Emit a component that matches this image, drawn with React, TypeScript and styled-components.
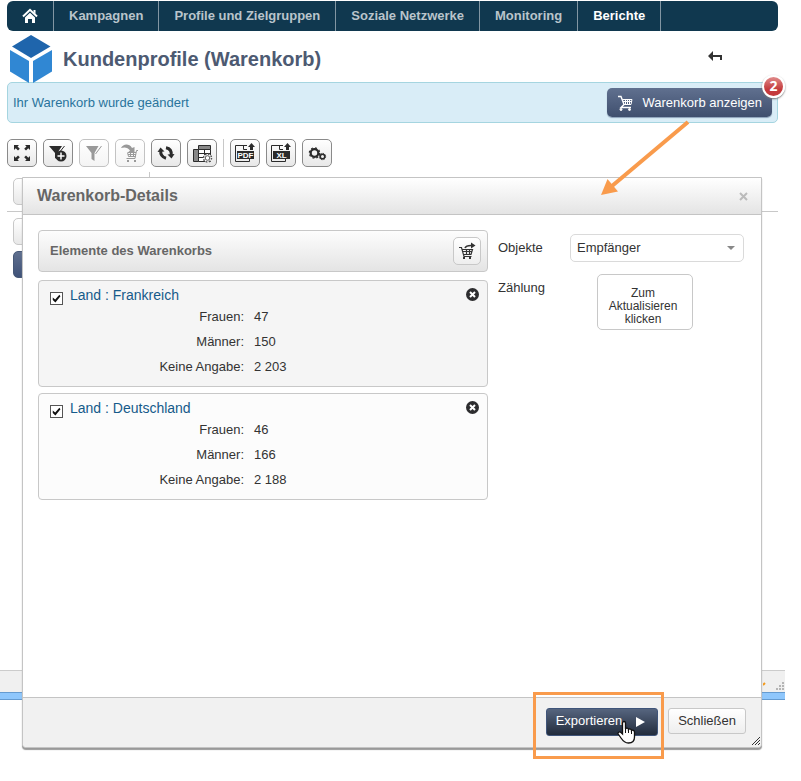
import React from 'react';
import styled, { createGlobalStyle, css } from 'styled-components';

const GlobalStyle = createGlobalStyle`
  *, *::before, *::after { box-sizing: border-box; }
  body {
    margin: 0;
    background: #fff;
    color: #333;
    font: 13px/18px "Liberation Sans", Arial, sans-serif;
  }
  button, input, select { font: inherit; color: inherit; margin: 0; }
  a { text-decoration: none; }
  svg { display: block; flex: none; }
`;

/* ---------- Page ---------- */

const Page = styled.div`
  position: relative;
  margin-right: 16px;
  padding-top: 1px;
`;

const NavBar = styled.nav`
  display: flex;
  margin: 0 7px;
  height: 30px;
  background: #10384f;
  border-radius: 6px;
`;

const NavLink = styled.a<{ $current?: boolean }>`
  display: flex;
  align-items: center;
  padding: 0 15px;
  border-right: 1px solid #8296a3;
  font-weight: bold;
  color: ${(p) => (p.$current ? '#fff' : '#b9c4cb')};
`;

const TitleRow = styled.header`
  display: flex;
  align-items: center;
  gap: 11px;
  height: 51px;
  padding: 4px 62px 0 9px;
`;

const PageTitle = styled.h1`
  flex: 1;
  margin: 0;
  font-size: 20px;
  line-height: 24px;
  color: #4d5a72;
`;

const PlainButton = styled.button`
  padding: 0;
  border: 0;
  background: none;
`;

const BackButton = styled(PlainButton)`
  padding-bottom: 4px;
`;

const RemoveButton = styled(PlainButton)`
  padding-top: 1px;
`;

const Notice = styled.div`
  display: flex;
  align-items: center;
  justify-content: space-between;
  height: 41px;
  margin: 0 7px;
  padding: 0 5px;
  border: 1px solid #a5d5e0;
  border-radius: 5px;
  background: #d9edf7;
  color: #2a749c;
`;

const CartButton = styled.button`
  position: relative;
  display: flex;
  align-items: center;
  gap: 9px;
  height: 29px;
  padding: 0 10px;
  border: 0;
  border-radius: 5px;
  background: linear-gradient(#60708f, #3f4f6e);
  color: #fff;
  box-shadow: 0 1px 1px #8ba0b8;
`;

const Badge = styled.span`
  position: absolute;
  top: -13px;
  right: -13px;
  width: 23px;
  height: 23px;
  border: 2px solid #fff;
  border-radius: 50%;
  background: linear-gradient(#e08a8a, #c43a3c 65%);
  box-shadow: 0 1px 2px #777;
  font: bold 14px/18px "Open Sans", sans-serif;
  text-align: center;
`;

const Toolbar = styled.div`
  display: flex;
  gap: 6px;
  padding: 16px 7px 0;
`;

const ToolButton = styled.button`
  width: 30px;
  height: 28px;
  padding: 0;
  border: 1px solid #8a8a8a;
  border-radius: 5px;
  background: linear-gradient(#fff, #e8e8e8);
  color: #2b2b2b;
  svg { margin: -1px; }
  &:disabled {
    border-color: #c3c3c3;
    background: linear-gradient(#fff, #f4f4f4);
    color: #999;
  }
`;

const ToolDivider = styled.span`
  width: 1px;
  background: #c8c8c8;
`;

/* ---------- Report behind the dialog ---------- */

const Report = styled.main`
  display: flex;
  flex-direction: column;
  height: 503px;
  padding: 5px 7px 0;
`;

const ColumnMark = styled.div`
  width: 1px;
  height: 6px;
  margin-left: 142px;
  background: #c8c8c8;
`;

const Field = styled.div<{ $active?: boolean }>`
  width: 60px;
  height: 27px;
  margin: 0 0 6px 6px;
  border: 1px solid ${(p) => (p.$active ? '#465877' : '#c8c8c8')};
  border-radius: 5px;
  background: ${(p) => (p.$active ? 'linear-gradient(#60708f, #3f5278)' : 'linear-gradient(#fff, #e8e8e8)')};
`;

const Rule = styled.hr`
  width: 100%;
  margin: 0 0 6px;
  border: 0;
  border-top: 1px solid #c8c8c8;
`;

const StatusBar = styled.footer`
  display: flex;
  justify-content: flex-end;
  align-items: flex-end;
  height: 22px;
  padding-bottom: 2px;
  border-top: 1px solid #ccc;
  background: #f0f0f0;
`;

const WindowEdge = styled.div`
  height: 8px;
  margin-bottom: 81px;
  border: solid #659bd0;
  border-width: 1px 0;
  background: #8fc7fc;
`;

/* ---------- Dialog ---------- */

const Dialog = styled.section`
  position: absolute;
  top: 177px;
  left: 22px;
  right: 23px;
  border: 1px solid #c4c4c4;
  border-radius: 0 0 4px 4px;
  background: #fff;
  box-shadow: 0 2px 1px #999;
`;

const DialogHeader = styled.div`
  display: flex;
  align-items: center;
  justify-content: space-between;
  height: 37px;
  padding: 0 13px 0 14px;
  border-bottom: 1px solid #c4c4c4;
  background: linear-gradient(#fff, #e4e4e4);
`;

const DialogTitle = styled.h2`
  margin: 0;
  font-size: 16px;
  line-height: 20px;
  color: #666;
`;

const DialogBody = styled.div`
  display: grid;
  grid-template-columns: 450fr 246fr;
  gap: 10px;
  min-height: 482px;
  padding: 15px 17px 15px 15px;
  align-items: start;
`;

const DialogFooter = styled.div`
  position: relative;
  display: flex;
  justify-content: flex-end;
  align-items: flex-start;
  gap: 10px;
  height: 50px;
  padding: 10px 15px;
  border-top: 1px solid #c4c4c4;
  border-radius: 0 0 4px 4px;
  background: #f1f1f1;
`;

const Grip = styled.svg`
  position: absolute;
  right: 1px;
  bottom: 2px;
`;

const ItemList = styled.div`
  display: flex;
  flex-direction: column;
  gap: 6px;
`;

const ListHeader = styled.div`
  display: flex;
  align-items: center;
  justify-content: space-between;
  height: 42px;
  margin-bottom: 2px;
  padding: 0 6px 0 11px;
  border: 1px solid #c8c8c8;
  border-radius: 4px;
  background: linear-gradient(#fdfdfd, #e4e4e4);
`;

const ListTitle = styled.h3`
  margin: 0;
  font-size: 13px;
  line-height: 18px;
  color: #666;
`;

const SmallButton = styled.button`
  width: 28px;
  height: 28px;
  padding: 0;
  border: 1px solid #c8c8c8;
  border-radius: 5px;
  background: linear-gradient(#fff, #eee);
  svg { margin: -1px; }
`;

const Card = styled.article<{ $shaded?: boolean }>`
  padding: 6px 8px 7px 11px;
  border: 1px solid #c8c8c8;
  border-radius: 4px;
  background: ${(p) => (p.$shaded ? '#f5f5f5' : '#fcfcfc')};
`;

const CardHead = styled.div`
  display: flex;
  align-items: flex-start;
  height: 17px;
`;

const CardLabel = styled.label`
  display: flex;
  flex: 1;
  gap: 7px;
  font-size: 14px;
  line-height: 17px;
  color: #155a8a;
`;

const CheckBox = styled.input`
  appearance: none;
  width: 13px;
  height: 13px;
  margin-top: 5px;
  border: 1px solid #555;
  background: #fff;
  &:checked::after {
    content: '';
    display: block;
    width: 11px;
    height: 11px;
    background: #111;
    clip-path: polygon(16% 42%, 38% 58%, 76% 16%, 86% 30%, 40% 86%, 16% 64%);
  }
`;

const Figures = styled.dl`
  display: grid;
  grid-template-columns: 194fr 225fr;
  column-gap: 10px;
  margin: 0;
  line-height: 25px;
  dt { text-align: right; }
  dd { margin: 0; }
`;

const Settings = styled.div`
  display: grid;
  grid-template-columns: 72px 1fr;
  row-gap: 12px;
  padding-top: 4px;
  label, span { line-height: 28px; }
`;

const SelectBox = styled.div`
  display: grid;
  align-items: center;
  select, svg { grid-area: 1 / 1; }
  svg { justify-self: end; margin-right: 9px; pointer-events: none; }
`;

const Select = styled.select`
  appearance: none;
  width: 100%;
  height: 28px;
  padding: 0 24px 0 6px;
  border: 1px solid #dadada;
  border-radius: 5px;
  background: #fff;
`;

const CountButton = styled.button`
  width: 96px;
  height: 56px;
  margin-left: 27px;
  padding: 8px 12px 0 8px;
  border: 1px solid #c8c8c8;
  border-radius: 5px;
  background: #fff;
  font-size: 12px;
  line-height: 13px;
`;

const Action = styled.button<{ $primary?: boolean }>`
  display: flex;
  align-items: center;
  gap: 14px;
  height: 26px;
  padding: 0 9px;
  border: 1px solid #c8c8c8;
  border-radius: 3px;
  background: linear-gradient(#fff, #eee);
  ${(p) =>
    p.$primary &&
    css`
      height: 28px;
      padding: 0 12px 3px 9px;
      border-color: #40557a;
      background: linear-gradient(#56657f, #222c3c);
      color: #fff;
      svg { margin-top: 3px; }
    `}
`;

const Highlight = styled.div`
  position: relative;
  &::after {
    content: '';
    position: absolute;
    inset: -16px -6px -23px -13px;
    border: 3px solid #f99b4c;
    pointer-events: none;
  }
`;

const Pointer = styled.svg`
  position: absolute;
  left: 71px;
  top: 12px;
`;

const Arrow = styled.svg`
  position: absolute;
  top: 119px;
  right: 95px;
  pointer-events: none;
`;

/* ---------- Icons ---------- */

const HomeIcon = () => (
  <svg width="16" height="16" viewBox="0 0 16 16" fill="none">
    <path d="M1 8.500L8 1.800L15 8.500" stroke="#fff" strokeWidth="2" />
    <path d="M3 9.500L8 4.700L13 9.500V15H10V11H6V15H3Z" fill="#fff" />
    <path d="M11.500 2h2v4l-2-2Z" fill="#fff" />
  </svg>
);

const Logo = () => (
  <svg width="43" height="49" viewBox="0 0 43 49">
    <path d="M22 1L41.500 12.500L22 24L3 12.500Z" fill="#1f65ac" />
    <path d="M1 16L20 27V49L1 37.500Z" fill="#3087d3" />
    <path d="M43 16L24 27V49L43 37.500Z" fill="#3087d3" />
  </svg>
);

const BackIcon = () => (
  <svg width="15" height="11" viewBox="0 0 15 11" fill="#333">
    <path d="M0 5L5 0V4H14V9H12V6H5V10Z" />
  </svg>
);

const CartIcon = () => (
  <svg width="17" height="16" viewBox="0 0 17 16" fill="none" stroke="#fff">
    <path d="M1 1.500H4L7 9.500L4 12.500H14" strokeWidth="1.400" />
    <path d="M5.500 4.500H15L14 9.500H7M6 6.500H15M8.500 4V9M10.500 4V9M12.500 4V9" />
    <circle cx="4" cy="14.500" r="1" fill="#fff" />
    <circle cx="12.500" cy="14.500" r="1" fill="#fff" />
  </svg>
);

const Glyph = ({ children }: { children: React.ReactNode }) => (
  <svg width="30" height="28" viewBox="0 0 30 28" fill="currentColor" aria-hidden="true">
    {children}
  </svg>
);

const corners = ['', 'translate(30 0) scale(-1 1)', 'translate(0 28) scale(1 -1)', 'translate(30 28) scale(-1 -1)'];

const ExpandIcon = () => (
  <Glyph>
    {corners.map((t) => (
      <path key={t} d="M7 6H12L10.500 7.500L12.800 9.800L11 11.500L8.700 9.200L7 11Z" transform={t || undefined} />
    ))}
  </Glyph>
);

const FilterAddIcon = () => (
  <Glyph>
    <path d="M6 7H19L15 13V21L12 19V14Z" />
    <path d="M21.500 7L16 14" stroke="currentColor" />
    <circle cx="18" cy="17" r="5.500" />
    <path d="M18 13.500V20.500M14.500 17H21.500" stroke="#fff" strokeWidth="1.500" />
  </Glyph>
);

const FilterIcon = () => (
  <Glyph>
    <path d="M7 7H19.500L15.500 14V22L12.500 20V14Z" />
    <path d="M22.500 7L16.500 15" stroke="currentColor" />
  </Glyph>
);

const CartAddIcon = () => (
  <Glyph>
    <path d="M6 9C8 5 14 4 17 9L19.500 8V13.500H13L15 11.500C13 8 9 8 6 9Z" />
    <path d="M23 11.500H21.500L20 19.500H11.500M13 13.500H21M12.500 13.500L13.500 17.500H20.500M13 15.500H21M15.500 13V17M18.500 13V17" fill="none" stroke="currentColor" />
    <rect x="12" y="21" width="2" height="2" />
    <rect x="19" y="21" width="2" height="2" />
  </Glyph>
);

const RefreshIcon = () => (
  <Glyph>
    <path d="M9.800 11.500C9.300 15.500 11 18 15 19.200" fill="none" stroke="currentColor" strokeWidth="3" />
    <path d="M6.500 13L9.500 8.500L13.500 12.500Z" />
    <path d="M15 8.800C19 9.500 20.800 12 20.200 16.500" fill="none" stroke="currentColor" strokeWidth="3" />
    <path d="M23.500 15L20.500 19.500L16.500 15.500Z" />
  </Glyph>
);

const TableIcon = () => (
  <Glyph>
    <path d="M11.500 6.500H23.500V10.500H11.500ZM6.500 10.500H11.500V22.500H6.500Z" fill="#888" stroke="currentColor" />
    <path d="M11.500 10.500H23.500V22.500H11.500ZM11.500 14.500H23.500M11.500 18.500H23.500M17.500 10.500V22.500" fill="#fff" stroke="currentColor" />
    <circle cx="20.500" cy="19" r="4" fill="#fff" stroke="#555" strokeWidth="1.500" strokeDasharray="1.600 1.540" />
    <circle cx="20.500" cy="19" r="2.300" fill="#fff" stroke="#555" />
  </Glyph>
);

const FileIcon = ({ kind }: { kind: string }) => (
  <Glyph>
    <path d="M17 6.500H5.500V22.500H19.500V20M13.500 6.500V10.500H17" fill="none" stroke="currentColor" />
    <rect x="7" y="12" width="17" height="8" />
    <path d="M21.500 4L25 8H23V11H20V8H18Z" />
    <text x="15.500" y="19" textAnchor="middle" fontFamily="Liberation Sans, Arial, sans-serif" fontWeight="bold" fontSize="8" fill="#fff">
      {kind}
    </text>
  </Glyph>
);

const GearsIcon = () => (
  <Glyph>
    <g fill="none" stroke="currentColor">
      <circle cx="12.500" cy="14" r="3.800" strokeWidth="2.200" />
      <circle cx="12.500" cy="14" r="5.200" strokeWidth="1.200" strokeDasharray="2 2.080" />
      <circle cx="20.500" cy="17.500" r="2.300" strokeWidth="1.600" />
      <circle cx="20.500" cy="17.500" r="3.200" strokeWidth="1" strokeDasharray="1.200 1.300" />
    </g>
  </Glyph>
);

const CloseIcon = () => (
  <svg width="9" height="9" viewBox="0 0 9 9" stroke="#bbb" strokeWidth="2">
    <path d="M1 1L8 8M8 1L1 8" />
  </svg>
);

const CartExportIcon = () => (
  <svg width="28" height="28" viewBox="0 0 28 28" fill="none" stroke="#333">
    <path d="M6 10.500H8.500L11 19.500H18.500M9.500 12.500H19.500L18 17.500H11M10 14.500H19M13.500 12V17M16.500 12V17" strokeWidth="1.200" />
    <path d="M12 11C13 8.500 15 8.500 18 8.500" strokeWidth="1.600" />
    <path d="M18 5.500L22.500 8.500L18 11.500Z" fill="#333" stroke="none" />
    <path d="M10 20H12V22H10ZM16 20H18V22H16Z" fill="#333" stroke="none" />
  </svg>
);

const RemoveIcon = () => (
  <svg width="13" height="13" viewBox="0 0 13 13">
    <circle cx="6.500" cy="6.500" r="6.500" fill="#2d2d2f" />
    <path d="M4 4L9 9M9 4L4 9" stroke="#fff" strokeWidth="2" />
  </svg>
);

/* ---------- Data ---------- */

const navItems = ['Kampagnen', 'Profile und Zielgruppen', 'Soziale Netzwerke', 'Monitoring', 'Berichte'];

const cartItems = [
  { name: 'Land : Frankreich', figures: [['Frauen:', '47'], ['Männer:', '150'], ['Keine Angabe:', '2 203']] },
  { name: 'Land : Deutschland', figures: [['Frauen:', '46'], ['Männer:', '166'], ['Keine Angabe:', '2 188']] },
];

const CartCard = ({ item, shaded }: { item: (typeof cartItems)[number]; shaded: boolean }) => (
  <Card $shaded={shaded}>
    <CardHead>
      <CardLabel>
        <CheckBox type="checkbox" defaultChecked />
        {item.name}
      </CardLabel>
      <RemoveButton aria-label={`${item.name} entfernen`}>
        <RemoveIcon />
      </RemoveButton>
    </CardHead>
    <Figures>
      {item.figures.map(([label, value]) => (
        <React.Fragment key={label}>
          <dt>{label}</dt>
          <dd>{value}</dd>
        </React.Fragment>
      ))}
    </Figures>
  </Card>
);

export default function App() {
  return (
    <>
      <GlobalStyle />
      <Page>
        <NavBar>
          <NavLink href="#start" aria-label="Startseite">
            <HomeIcon />
          </NavLink>
          {navItems.map((name) => (
            <NavLink key={name} href={`#${name}`} $current={name === 'Berichte'}>
              {name}
            </NavLink>
          ))}
        </NavBar>

        <TitleRow>
          <Logo />
          <PageTitle>Kundenprofile (Warenkorb)</PageTitle>
          <BackButton aria-label="Zurück">
            <BackIcon />
          </BackButton>
        </TitleRow>

        <Notice>
          Ihr Warenkorb wurde geändert
          <CartButton>
            <CartIcon />
            Warenkorb anzeigen
            <Badge>2</Badge>
          </CartButton>
        </Notice>

        <Toolbar>
          <ToolButton aria-label="Vollbild"><ExpandIcon /></ToolButton>
          <ToolButton aria-label="Filter hinzufügen"><FilterAddIcon /></ToolButton>
          <ToolButton aria-label="Filter" disabled><FilterIcon /></ToolButton>
          <ToolButton aria-label="In den Warenkorb" disabled><CartAddIcon /></ToolButton>
          <ToolButton aria-label="Aktualisieren"><RefreshIcon /></ToolButton>
          <ToolButton aria-label="Tabelle"><TableIcon /></ToolButton>
          <ToolDivider />
          <ToolButton aria-label="PDF-Export"><FileIcon kind="PDF" /></ToolButton>
          <ToolButton aria-label="Excel-Export"><FileIcon kind="XL" /></ToolButton>
          <ToolButton aria-label="Optionen"><GearsIcon /></ToolButton>
        </Toolbar>

        <Report>
          <ColumnMark />
          <Field />
          <Rule />
          <Field />
          <Field $active />
        </Report>
        <StatusBar>
          <svg width="22" height="8" viewBox="0 0 22 8" fill="#b5b5b5">
            <path d="M0 3L2 1" stroke="#f39a1c" strokeWidth="2" />
            <path d="M19 0h2v2h-2ZM16 3h2v2h-2ZM19 3h2v2h-2ZM13 6h2v2h-2ZM16 6h2v2h-2ZM19 6h2v2h-2Z" />
          </svg>
        </StatusBar>
        <WindowEdge />

        <Dialog role="dialog" aria-labelledby="dialog-title">
          <DialogHeader>
            <DialogTitle id="dialog-title">Warenkorb-Details</DialogTitle>
            <PlainButton aria-label="Dialog schließen">
              <CloseIcon />
            </PlainButton>
          </DialogHeader>
          <DialogBody>
            <ItemList>
              <ListHeader>
                <ListTitle>Elemente des Warenkorbs</ListTitle>
                <SmallButton aria-label="Warenkorb exportieren">
                  <CartExportIcon />
                </SmallButton>
              </ListHeader>
              {cartItems.map((item, i) => (
                <CartCard key={item.name} item={item} shaded={i % 2 === 0} />
              ))}
            </ItemList>
            <Settings>
              <label htmlFor="objects">Objekte</label>
              <SelectBox>
                <Select id="objects">
                  <option>Empfänger</option>
                </Select>
                <svg width="8" height="4" viewBox="0 0 8 4"><path d="M0 0H8L4 4Z" fill="#888" /></svg>
              </SelectBox>
              <span id="count-label">Zählung</span>
              <CountButton aria-describedby="count-label">Zum Aktualisieren klicken</CountButton>
            </Settings>
          </DialogBody>
          <DialogFooter>
            <Highlight>
              <Action $primary>
                Exportieren
                <svg width="9" height="10" viewBox="0 0 9 10"><path d="M0 0L9 5L0 10Z" fill="#fff" /></svg>
              </Action>
              <Pointer width="19" height="24" viewBox="0 0 19 24">
                <path
                  d="M5.500 14V3C5.500 1 8.500 1 8.500 3V9C9 7.500 11.500 8 11.500 9.500C12.500 8.500 14.500 9 14.500 10.500C15.500 9.800 17.500 10.200 17.500 12V17C17.500 21 15 23 11.500 23C7.500 23 6 21 4 18L1.200 14C.5 12.500 2.500 11.200 4 12.500Z"
                  fill="#fff"
                  stroke="#111"
                  strokeWidth="1.300"
                />
                <path d="M8.500 9V13M11.500 10V13M14.500 11V14" stroke="#111" />
              </Pointer>
            </Highlight>
            <Action>Schließen</Action>
            <Grip width="8" height="8" viewBox="0 0 8 8" stroke="#333">
              <path d="M0 8L8 0M3 8L8 3M6 8L8 6" />
            </Grip>
          </DialogFooter>
        </Dialog>

        <Arrow width="90" height="78" viewBox="0 0 90 78">
          <path d="M88 3L12 67" stroke="#f99b4c" strokeWidth="4" />
          <path d="M1 76L7.500 60L18 72.500Z" fill="#f99b4c" />
        </Arrow>
      </Page>
    </>
  );
}
